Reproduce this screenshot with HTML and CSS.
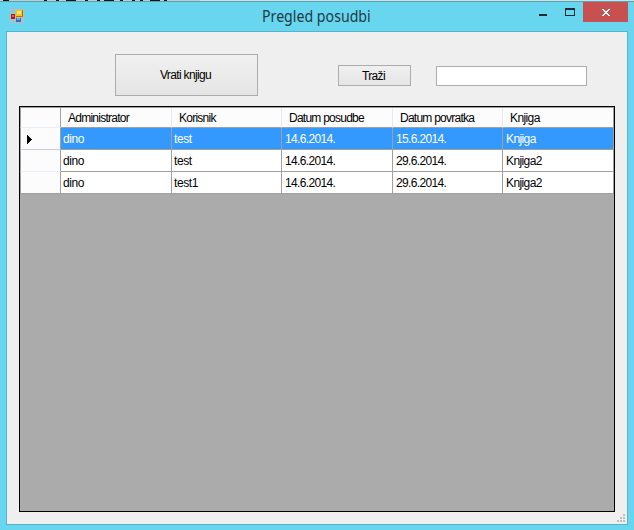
FILE: index.html
```html
<!DOCTYPE html>
<html lang="hr">
<head>
<meta charset="utf-8">
<title>Pregled posudbi</title>
<link rel="stylesheet" href="styles.css">
</head>
<body>
<svg class="backdrop" width="634" height="1" shape-rendering="crispEdges"><path fill="#c9c9c9" d="M0 0h200v1H0z"/><path fill="#111" d="M3 0h6v1h-6zM44 0h3v1h-3zM56 0h3v1h-3zM66 0h10v1H66zM85 0h3v1h-3zM97 0h3v1h-3zM104 0h10v1h-10zM120 0h3v1h-3zM132 0h3v1h-3zM140 0h3v1h-3zM150 0h10v1h-10zM164 0h3v1h-3z"/></svg>
<div class="window">
  <header class="titlebar">
    <svg class="app-icon" width="14" height="14" shape-rendering="crispEdges">
      <path fill="#c5b9b5" d="M0 0h14v14H0z"/><path fill="#69d6f0" d="M1 1h4v3H1zM1 11h4v2H1zM12 10h1v3h-1z"/>
      <path fill="#a51d12" d="M1 5h4v5H1z"/><path fill="#e5695c" d="M2 6h2v2H2z"/>
      <path fill="#a87804" d="M6 1h7v7H6z"/><path fill="#f6c51d" d="M6 1h6v6H6z"/><path fill="#ffe680" d="M7 2h4v3H7z"/>
      <path fill="#3568c9" d="M6 9h5v4H6z"/><path fill="#78a9f3" d="M7 9h3v2H7z"/>
    </svg>
    <h1><span class="title-text">Pregled posudbi</span></h1>
    <div class="controls">
      <svg width="108" height="20" shape-rendering="crispEdges">
        <path fill="#222b2e" d="M19 12h8v2h-8z"/>
        <path fill="#222b2e" fill-rule="evenodd" d="M45 6h10v8H45zM46 8v5h8V8z"/>
        <path fill="#c75050" d="M63 0h45v20H63z"/>
        <path fill="#fff" d="M82 7h2v1h1v1h2V8h1V7h2v1h-1v1h-1v1h-1v1h1v1h1v1h1v1h-2v-1h-1v-1h-2v1h-1v1h-2v-1h1v-1h1v-1h1v-1h-1V9h-1V8h-1z"/>
      </svg>
    </div>
  </header>
  <main class="client">
    <div class="toolbar">
      <button class="btn return"><span>Vrati knjigu</span></button>
      <button class="btn search"><span>Traži</span></button>
      <input class="query" type="text" aria-label="Traži">
    </div>
    <div class="grid">
      <div class="row head"><div class="rh"></div><div><span class="t-admin">Administrator</span></div><div><span>Korisnik</span></div><div><span>Datum posudbe</span></div><div><span>Datum povratka</span></div><div><span class="t-knj">Knjiga</span></div></div>
      <div class="row selected"><div class="rh"><svg width="5" height="9" shape-rendering="crispEdges"><path d="M0 0h1v1h1v1h1v1h1v1h1v1H4v1H3v1H2v1H1v1H0z"/></svg></div><div><span class="t-word">dino</span></div><div><span class="t-word">test</span></div><div><span class="t-date">14.6.2014.</span></div><div><span class="t-date">15.6.2014.</span></div><div><span class="t-knj">Knjiga</span></div></div>
      <div class="row"><div class="rh"></div><div><span class="t-word">dino</span></div><div><span class="t-word">test</span></div><div><span class="t-date">14.6.2014.</span></div><div><span class="t-date">29.6.2014.</span></div><div><span class="t-knj">Knjiga2</span></div></div>
      <div class="row"><div class="rh"></div><div><span class="t-word">dino</span></div><div><span class="t-word">test1</span></div><div><span class="t-date">14.6.2014.</span></div><div><span class="t-date">29.6.2014.</span></div><div><span class="t-knj">Knjiga2</span></div></div>
    </div>
    <svg class="grip" width="8" height="8" shape-rendering="crispEdges"><path fill="#bfbfbf" d="M6 0h2v2H6zM3 3h2v2H3zM6 3h2v2H6zM0 6h2v2H0zM3 6h2v2H3zM6 6h2v2H6z"/></svg>
  </main>
</div>
</body>
</html>
```

FILE: styles.css
```css
* { box-sizing: border-box; }
body { margin: 0; width: 634px; height: 530px; overflow: hidden; background: #dcdcdc; font: 12px/14px "Liberation Sans", Arial, sans-serif; color: #000; }
.backdrop { display: block; }
.window { height: 529px; border-top: 1px solid #4ba6bc; background: #69d6f0; padding: 0 6px 5px; }
.titlebar { height: 29px; display: grid; grid-template-columns: 108px 1fr 108px; margin-right: -6px; align-items: start; }
.app-icon { margin: 7px 0 0 4px; }
h1 { margin: 4px 0 0; font: 16px/20px "Noto Sans", sans-serif; color: #1e3a42; padding-left: 148px; white-space: nowrap; }
.title-text { display: inline-block; transform-origin: left; transform: scaleX(.885); }
.controls { height: 20px; margin-right: 6px; margin-left: -6px; }
.controls svg { display: block; }
.client { height: 494px; border: 1px solid #55b4cb; background: #efefef; padding: 22px 12px 0; position: relative; }
.toolbar { display: flex; height: 52px; padding-left: 96px; align-items: flex-start; }
.btn { border: 1px solid #acacac; background: linear-gradient(#f0f0f0, #e5e5e5); padding: 0 2px 0 0; font: inherit; color: #000; }
.return { width: 143px; height: 42px; }
.search { width: 73px; height: 21px; margin: 11px 0 0 80px; }
.query { width: 151px; height: 20px; margin: 12px 0 0 25px; border: 1px solid #abadb3; background: #fff; padding: 2px; }
.grid { width: 596px; height: 406px; border: 1px solid #000; background: #ababab; }
.row { display: grid; grid-template-columns: 41px 111px 110px 111px 110px 111px; height: 22px; }
.row > div { border-right: 1px solid #a0a0a0; border-bottom: 1px solid #a0a0a0; background: #fff; padding: 4px 0 0 3px; white-space: nowrap; overflow: hidden; }
.row.head { height: 21px; border-top: 1px solid #a0a0a0; }
.row.head > div { background: #fcfcfd; border-right-color: #e2ecf7; padding: 3px 0 0 7px; }
.row.head > div:last-child, .row.head > .rh { border-right-color: #a0a0a0; }
.row > .rh { background: #fcfcfd; border-left: 1px solid #a0a0a0; border-bottom-color: #e6eef8; }
.row:last-child > .rh { border-bottom-color: #a0a0a0; }
.row.selected > div { background: #3399ff; color: #fff; }
.row.selected > .rh { background: #fcfcfd; border-bottom-color: #c5cbe0; padding: 7px 0 0 6px; }
.rh svg { display: block; }
.row span { letter-spacing: -.75px; }
.btn span { letter-spacing: -.65px; }
.row .t-date { letter-spacing: -.65px; }
.row .t-admin { letter-spacing: -.75px; }
.row .t-knj { letter-spacing: -.6px; }
.row .t-word { letter-spacing: -.4px; margin-left: -1px; }
.grip { position: absolute; right: 2px; bottom: 2px; }
```
